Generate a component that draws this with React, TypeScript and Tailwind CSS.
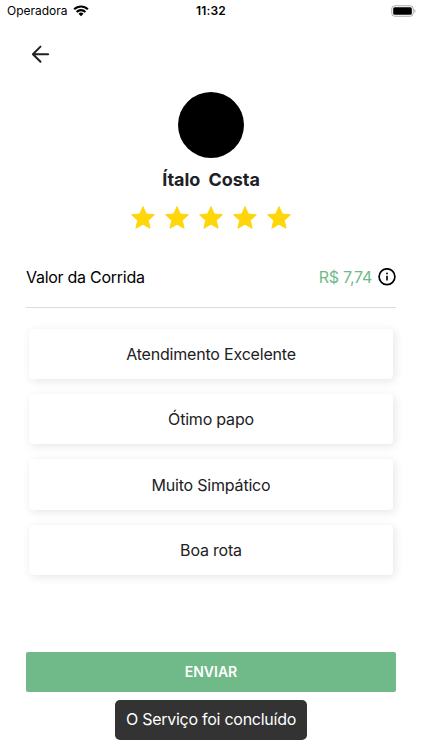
const compliments = ['Atendimento Excelente', 'Ótimo papo', 'Muito Simpático', 'Boa rota'];

function StatusBar() {
  return (
    <div className="grid h-[22px] grid-cols-3 items-center text-black">
      <div className="flex items-center gap-[5px] pl-[7px]">
        <span className="text-[12px] leading-[22px]">Operadora</span>
        <svg width="16" height="12" viewBox="0 0 16 12" fill="none" stroke="currentColor" strokeWidth="2.1">
          <path d="M1.1 4.3a9.8 9.8 0 0 1 13.8 0" />
          <path d="M3.6 7a6.2 6.2 0 0 1 8.8 0" />
          <path d="M8 11.3 5.5 8.8a3.6 3.6 0 0 1 5 0Z" fill="currentColor" stroke="none" />
        </svg>
      </div>
      <span className="text-center text-[12px] leading-[22px] font-semibold tracking-[0.2px]">11:32</span>
      <svg className="mr-[5px] ml-auto" width="26" height="12" viewBox="0 0 26 12">
        <rect x="0.75" y="0.75" width="21.5" height="10.5" rx="3" fill="#fff" stroke="#aaa" strokeWidth="1" />
        <rect x="2.2" y="2.2" width="18.6" height="7.6" rx="1.5" fill="#000" />
        <path d="M23.5 4.2c1.3.5 1.3 3.1 0 3.6Z" fill="#999" />
      </svg>
    </div>
  );
}

function Star() {
  return (
    <svg width="26" height="26" viewBox="0 0 26 26" fill="#ffd60a" stroke="#ffd60a" strokeWidth="1" strokeLinejoin="round">
      <path d="m13 1.7 3.3 7.3 8.1.8-6.1 5.5 1.8 8-7.1-4.1-7.1 4.1 1.8-8-6.1-5.5 8.1-.8Z" />
    </svg>
  );
}

export default function App() {
  return (
    <main className="flex h-[750px] w-[422px] flex-col overflow-hidden bg-white font-['Inter','Liberation_Sans',sans-serif] text-[#202124]">
      <StatusBar />
      <header className="flex h-[70px] shrink-0 pt-[23px] pl-[31px]">
        <button className="h-[19px] w-[19px]" aria-label="Voltar">
          <svg width="19" height="19" viewBox="0 0 19 19" fill="none" stroke="#202124" strokeWidth="2" strokeLinecap="round" strokeLinejoin="round">
            <path d="M17.1 9.2H2M9.5 1.6 1.9 9.2l7.6 7.6" />
          </svg>
        </button>
      </header>
      <section className="flex flex-col items-center">
        <div className="h-[66px] w-[66px] rounded-full bg-black" />
        <h1 className="mt-[8px] text-[18px] leading-[28px] font-bold tracking-[-0.07px] whitespace-pre">Ítalo  Costa</h1>
        <div className="mt-[11px] flex gap-[8px]">
          {[1, 2, 3, 4, 5].map((n) => <Star key={n} />)}
        </div>
      </section>
      <section className="mx-[26px] mt-[28px] flex h-[49px] shrink-0 justify-between border-b border-[#dcdcdc]">
        <span className="text-[16px] leading-[36px] tracking-[-0.27px] text-black">Valor da Corrida</span>
        <div className="flex h-[36px] items-center gap-[6px]">
          <span className="text-[16px] tracking-[-0.25px] text-[#70b988]">R$ 7,74</span>
          <svg width="18" height="18" viewBox="0 0 18 18" fill="none" stroke="#000">
            <circle cx="9" cy="8.7" r="7.9" strokeWidth="1.7" />
            <path d="M9 7.8v4.8" strokeWidth="1.6" />
            <circle cx="9" cy="5.4" r="0.95" fill="#000" stroke="none" />
          </svg>
        </div>
      </section>
      <section className="mx-[29px] mt-[20.5px] flex flex-col gap-[15.2px]">
        {compliments.map((label) => (
          <button key={label} className="h-[50.3px] rounded-[4px] bg-white text-[16px] tracking-[-0.2px] shadow-[2px_2px_10px_rgba(0,0,0,0.1)]">
            {label}
          </button>
        ))}
      </section>
      <button className="mx-[26px] mt-auto h-[40px] shrink-0 rounded-[2px] bg-[#70b988] pb-px text-[14px] font-semibold text-white">ENVIAR</button>
      <div className="mt-[7.5px] mb-[10.5px] flex h-[40px] w-[192px] shrink-0 items-center justify-center self-center rounded-[5px] bg-[#333] pb-px text-[16px] tracking-[-0.26px] whitespace-nowrap text-white">
        O Serviço foi concluído
      </div>
    </main>
  );
}
